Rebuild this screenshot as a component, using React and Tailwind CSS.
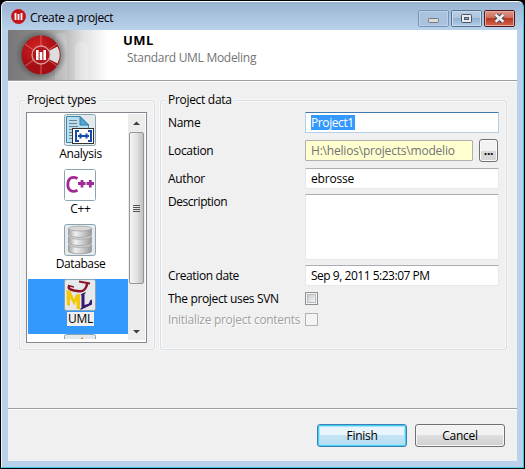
import React from 'react';

function Logo({ className }) {
  return (
    <svg className={className} viewBox="0 0 40 40">
      <defs>
        <radialGradient id="red" cx="40%" cy="30%">
          <stop offset="0" stopColor="#d32022" />
          <stop offset="1" stopColor="#a50f14" />
        </radialGradient>
      </defs>
      <circle cx="20" cy="20" r="19.5" fill="url(#red)" />
      <path d="M20 20L36.5 11.5A18 18 0 0 1 36.5 28.5Z" fill="#dedede" />
      <path d="M20 0V40M4 9L36 31M4 31L36 9" stroke="#d88" strokeWidth="0.7" />
      <circle cx="20" cy="20" r="9" fill="#b5161b" stroke="#d5a0a0" strokeWidth="1.3" />
      <path d="M16.3 15V25M20 17V25M23.7 15V25" stroke="#fff" strokeWidth="2.6" />
    </svg>
  );
}

function SmallLogo() {
  return (
    <svg className="ml-[3px] size-[15px]" viewBox="0 0 15 15">
      <circle cx="7.5" cy="7.5" r="7.4" fill="#c3161c" />
      <path d="M4.5 4V11M7.5 5V11M10.5 4V11" stroke="#fff" strokeWidth="1.8" />
    </svg>
  );
}

function WindowButtons() {
  return (
    <svg className="mt-[9px] mr-[2px] h-[18px] w-[98px]" viewBox="0 0 98 18">
      <defs>
        <linearGradient id="wb" x2="0" y2="1">
          <stop offset="0" stopColor="#b9cfe6" />
          <stop offset=".48" stopColor="#abc5df" />
          <stop offset=".5" stopColor="#93b2d2" />
          <stop offset="1" stopColor="#b3cfea" />
        </linearGradient>
        <linearGradient id="cb" x2="0" y2="1">
          <stop offset="0" stopColor="#dc9b8e" />
          <stop offset=".48" stopColor="#cf6b58" />
          <stop offset=".5" stopColor="#b93720" />
          <stop offset="1" stopColor="#d06a50" />
        </linearGradient>
      </defs>
      <rect x="1.5" y="1.5" width="30" height="16" rx="1.5" fill="#a9c3de" stroke="#7893b3" />
      <rect x="2.5" y="2.5" width="28" height="14" fill="none" stroke="#b9d0e7" />
      <rect x="11.5" y="9.5" width="10" height="4" rx=".8" fill="#ddddd8" stroke="#777980" />
      <rect x="34.5" y="1.5" width="30" height="16" rx="1.5" fill="url(#wb)" stroke="#57708f" />
      <rect x="35.5" y="2.5" width="28" height="14" fill="none" stroke="#cadbed" />
      <rect x="44.5" y="5.5" width="10" height="8" rx=".8" fill="#e9ebee" stroke="#4d5568" />
      <rect x="47.5" y="8.5" width="4" height="2" fill="#8daed1" stroke="#4d5568" />
      <rect x="67.5" y="1.5" width="30" height="16" rx="1.5" fill="url(#cb)" stroke="#4e1721" />
      <rect x="68.5" y="2.5" width="28" height="14" fill="none" stroke="#e5ab9f" />
      <path d="M79 6L86 12.5M86 6L79 12.5" stroke="#454c60" strokeWidth="4.6" />
      <path d="M78.6 5.8L86.4 12.7M86.4 5.8L78.6 12.7" stroke="#eee" strokeWidth="2.6" />
    </svg>
  );
}

function Header() {
  return (
    <header className="flex h-[52px] border-b border-white bg-white">
      <div className="flex h-[51px] w-full border-b border-[#9c9c9c]">
        <svg className="h-[50px] w-[100px] shrink-0" viewBox="0 0 100 50">
          <defs>
            <linearGradient id="hg">
              <stop offset="0" stopColor="#777" />
              <stop offset=".25" stopColor="#858585" />
              <stop offset=".48" stopColor="#a9a9a9" />
              <stop offset=".75" stopColor="#e0e0e0" />
              <stop offset="1" stopColor="#fff" />
            </linearGradient>
            <radialGradient id="shade">
              <stop offset=".6" stopColor="#222" stopOpacity=".65" />
              <stop offset="1" stopColor="#555" stopOpacity="0" />
            </radialGradient>
          </defs>
          <rect width="100" height="50" fill="url(#hg)" />
          <path d="M47 50V8Q47 3 53 3T59 8V50Z" fill="#fff" opacity=".15" />
          <path d="M67 50V18Q67 12 73 12T80 18V50Z" fill="#fff" opacity=".22" />
          <circle cx="33" cy="25" r="26" fill="url(#shade)" />
          <svg x="13" y="5" width="40" height="40"><Logo /></svg>
        </svg>
        <div className="ml-[15px] whitespace-nowrap">
          <h1 className="mt-[1px] h-[18px] text-[13px] leading-[18px] font-bold tracking-[0.5px] text-black">UML</h1>
          <p className="ml-[4px] h-[18px] text-[12px] leading-[18px] tracking-[-0.29px] text-[#737373]">Standard UML Modeling</p>
        </div>
      </div>
    </header>
  );
}

function Group({ title, className, titleClass, children }) {
  return (
    <fieldset className={`h-[258px] min-w-0 rounded-[3px] border border-[#d5dfe5] p-0 shadow-[inset_0_0_0_1px_#fafafa,0_0_0_1px_#f7f7f7] ${className}`}>
      <legend className={`ml-[5px] h-[16px] bg-[#f0f0f0] px-[2px] leading-[16px] whitespace-nowrap ${titleClass}`}>{title}</legend>
      {children}
    </fieldset>
  );
}

function IconFrame({ children }) {
  return (
    <svg className="h-[32px] w-[32px] shrink-0" viewBox="0 0 32 32">
      <defs>
        <linearGradient id="tile" x2="0" y2="1">
          <stop stopColor="#e4e9ed" />
          <stop offset="1" stopColor="#e8e8e8" />
        </linearGradient>
        <linearGradient id="metal">
          <stop stopColor="#a2a2a2" />
          <stop offset=".3" stopColor="#efefef" />
          <stop offset=".6" stopColor="#cecece" />
          <stop offset="1" stopColor="#999" />
        </linearGradient>
      </defs>
      <rect x=".5" y=".5" width="31" height="31" rx="2" fill="url(#tile)" stroke="#8ba4b4" />
      {children}
    </svg>
  );
}

function AnalysisIcon() {
  return (
    <IconFrame>
      <path d="M2.5 2.5H16L24.5 11V28.5H2.5Z" fill="#b9deef" stroke="#3c86aa" />
      <path d="M16 2.5V11H24.5Z" fill="#51a8d3" stroke="#327da3" />
      <path d="M5 6.5H13M5 9.5H13M5 12.5H14M5 15.5H9M5 18.5H8M5 21.5H8M5 24.5H8" stroke="#71828b" />
      <rect x="8.5" y="14.5" width="21" height="15" fill="#fff" stroke="#333" />
      <path d="M15 17H12V27H15M24 17H27V27H24M14 22H25M16.5 19.5V24.5M22.5 19.5V24.5" fill="none" stroke="#174bae" strokeWidth="2" />
    </IconFrame>
  );
}

function CppIcon() {
  return (
    <IconFrame>
      <rect x="1" y="1" width="30" height="30" rx="1" fill="#fff" />
      <path d="M13.5 9.5C8 6.5 3.8 9.5 3.8 15.5S8 23.8 13.5 21.2M14 14.5H21.5M18 11V18.5M22.5 14.5H30M26.3 11V18.5" fill="none" stroke="#a12a94" strokeWidth="2.8" />
    </IconFrame>
  );
}

function DatabaseIcon() {
  return (
    <IconFrame>
      {[21, 12.8, 4.6].map((y) => (
        <g key={y} transform={`translate(0 ${y})`}>
          <path d="M4.5 0V6C4.5 9.6 27.5 9.6 27.5 6V0Z" fill="url(#metal)" stroke="#8c8c8c" strokeWidth=".6" />
          <ellipse cx="16" cy="0" rx="11.5" ry="2.4" fill="#d8d8d8" stroke="#929292" strokeWidth=".6" />
        </g>
      ))}
    </IconFrame>
  );
}

function UmlIcon() {
  return (
    <IconFrame>
      <path d="M5.5 6.5C3.5 9.5 6 10.5 10 11.5L15 12.2C20 13 22 10 23.5 4" fill="none" stroke="#8b1526" strokeWidth="2.6" />
      <path d="M4 6.5L10 8M15 2.5L26 4.5" fill="none" stroke="#8b1526" strokeWidth="1.8" />
      <path d="M2.5 11L6.5 12L10 20L12 15.5L16 15V30.5L12.5 29.5V21.5L10.3 26.5L6 19V27L3 26Z" fill="#f2c80b" />
      <path d="M16.5 15.5L21.5 13V14.5L20.5 15V26L25 24.5L26 21.5L28 20.5V25.5L16.5 31V29.5L17.5 29V16.5Z" fill="#3b176c" />
    </IconFrame>
  );
}

function ProjectType({ icon, label, selected, labelClass = '' }) {
  return (
    <div className={`flex h-[55px] w-[100px] shrink-0 flex-col items-center pl-[4px] ${selected ? 'bg-[#3399ff]' : ''}`}>
      {icon}
      <span className={`mt-px ml-[1px] flex h-[14px] items-center px-[1px] whitespace-nowrap ${selected ? 'bg-[#f0f0f0]' : ''} ${labelClass}`}>{label}</span>
    </div>
  );
}

function Scrollbar() {
  return (
    <div className="flex h-[226px] w-[17px] shrink-0 flex-col items-center bg-[#ececec]">
      <svg className="h-[18px] w-[17px] shrink-0" viewBox="0 0 17 18"><path d="M5 11L8.5 7.5L12 11Z" fill="#404040" /></svg>
      <div className="flex h-[152px] w-[15px] shrink-0 flex-col items-center justify-center gap-[1px] rounded-[2px] border border-[#979797] bg-linear-to-r from-[#f5f5f5] via-[#e3e3e5] to-[#c0c0c4]">
        <i className="h-px w-[7px] bg-[#555]" />
        <i className="h-px w-[7px] bg-[#555]" />
        <i className="h-px w-[7px] bg-[#555]" />
        <i className="h-px w-[7px] bg-[#555]" />
      </div>
      <svg className="mt-auto h-[17px] w-[17px] shrink-0" viewBox="0 0 17 17"><path d="M5 7L12 7L8.5 10.5Z" fill="#404040" /></svg>
    </div>
  );
}

const field = 'flex h-[21px] items-center rounded-[1px] border border-[#e3e9ef] border-t-[#abadb3] bg-white px-[5px] whitespace-nowrap';

function Row({ label, className, labelClass = '', children }) {
  return (
    <div className={`flex ${className}`}>
      <span className={`w-[137px] shrink-0 leading-[21px] whitespace-nowrap ${labelClass}`}>{label}</span>
      {children}
    </div>
  );
}

export default function App() {
  return (
    <div className="h-[469px] w-[525px] bg-black p-px font-['Open_Sans','Noto_Sans',sans-serif] text-[12px] tracking-[-0.3px] text-black">
      <div className="h-[467px] w-[523px] rounded-t-[6px] border border-t-white border-r-[#42c5df] border-b-[#42c5df] border-l-[#f1f6fb] bg-[linear-gradient(#99b4d1_0px,#b9d1ea_28px,#b9d1ea_100%)] px-[6px]">
        <div className="flex h-[28px] justify-between">
          <div className="flex items-center">
            <SmallLogo />
            <span className="ml-[4px] pt-[4px] tracking-[-0.37px] whitespace-nowrap">Create a project</span>
          </div>
          <div className="-mt-[2px]"><WindowButtons /></div>
        </div>
        <main className="h-[431px] w-[509px] bg-[#f0f0f0]">
          <Header />
          <div className="flex h-[326px] items-start gap-[5px] pt-[10px] pl-[11px]">
            <Group title="Project types" className="w-[136px]" titleClass="tracking-[-0.26px]">
              <div className="mt-[4px] ml-[6px] flex h-[231px] w-[121px] border border-[#828790] bg-white p-px">
                <div className="flex h-[225px] w-[100px] shrink-0 flex-col overflow-hidden">
                  <ProjectType icon={<AnalysisIcon />} label="Analysis" />
                  <ProjectType icon={<CppIcon />} label="C++" />
                  <ProjectType icon={<DatabaseIcon />} label="Database" labelClass="tracking-[-0.4px]" />
                  <ProjectType icon={<UmlIcon />} label="UML" selected labelClass="tracking-[-0.2px]" />
                  <ProjectType icon={<IconFrame><path d="M16 5L19 3V5Z" fill="#e78231" /></IconFrame>} label="" />
                </div>
                <Scrollbar />
              </div>
            </Group>
            <Group title="Project data" className="w-[347px]" titleClass="tracking-[-0.3px]">
              <div className="pt-[4px] pl-[7px]">
                <Row label="Name" className="h-[28px]">
                  <div className="flex h-[21px] w-[194px] items-center rounded-[1px] border border-[#b5cfe7] border-t-[#3d7bad] bg-white px-[5px]">
                    <span className="h-[15px] bg-[#3399ff] pr-[1px] leading-[15px] tracking-[-0.4px] text-white">Project1</span>
                  </div>
                </Row>
                <Row label="Location" className="h-[28px]">
                  <div className="flex h-[21px] w-[168px] items-center rounded-[1px] border border-[#afafaf] bg-[#ffffd0] px-[5px] tracking-[-0.2px] whitespace-nowrap text-[#737373]">H:\helios\projects\modelio</div>
                  <button className="-mt-px ml-[6px] flex h-[23px] w-[19px] items-center justify-center rounded-[3px] border border-[#707070] bg-[linear-gradient(#f2f2f2_50%,#d8d8d8_50%)] font-bold shadow-[inset_0_0_0_1px_#fbfbfb]">...</button>
                </Row>
                <Row label="Author" className="h-[26px]"><div className={`${field} w-[194px] tracking-[-0.2px]`}>ebrosse</div></Row>
                <Row label="Description" className="h-[71px]" labelClass="-mt-[3px] tracking-[-0.45px]"><div className="h-[66px] w-[194px] rounded-[1px] border border-[#e3e9ef] border-t-[#abadb3] bg-white" /></Row>
                <Row label="Creation date" className="h-[27px]" labelClass="tracking-[-0.38px]"><div className={`${field} w-[194px] tracking-[-0.48px]`}>Sep 9, 2011 5:23:07 PM</div></Row>
                <Row label="The project uses SVN" className="h-[21px]" labelClass="-mt-[4px] tracking-[-0.35px]">
                  <div className="size-[13px] border border-[#8e8f8f] bg-[#f4f4f4] p-px"><div className="size-[9px] border border-[#b8bdc4] bg-linear-to-br from-[#c7ccd3] to-[#f5f5f5]" /></div>
                </Row>
                <Row label="Initialize project contents" className="h-[13px]" labelClass="-mt-[4px] text-[#a0a0a0] [text-shadow:1px_1px_#fff]">
                  <div className="size-[13px] border border-[#b1b1b1] bg-[#f4f4f4]" />
                </Row>
              </div>
            </Group>
          </div>
          <footer className="flex h-[53px] gap-[8px] border-t border-[#a0a0a0] pt-[15px] pl-[309px] shadow-[inset_0_1px_#fff]">
            <button className="h-[23px] w-[90px] rounded-[3px] border border-[#3c7fb1] bg-[linear-gradient(#e9f5fc_48%,#c5e4f5_50%,#b4dcf2)] leading-[20px] shadow-[inset_0_0_0_1px_#43cdf4,inset_0_0_0_2px_#a4e5f9]">Finish</button>
            <button className="h-[23px] w-[90px] rounded-[3px] border border-[#707070] bg-[linear-gradient(#f2f2f2_48%,#dedede_50%,#cfcfcf)] leading-[20px] shadow-[inset_0_0_0_1px_#f8f8f8]">Cancel</button>
          </footer>
        </main>
      </div>
    </div>
  );
}
